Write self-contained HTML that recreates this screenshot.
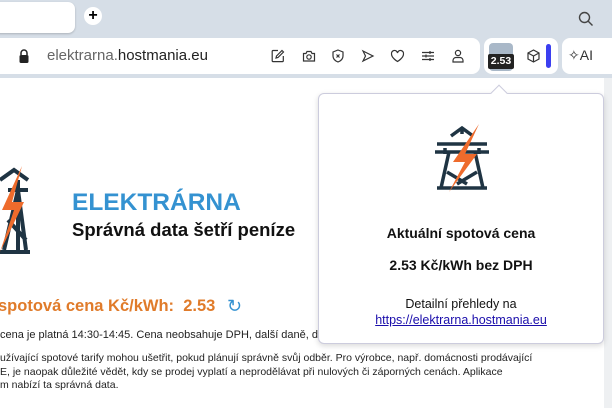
<!DOCTYPE html>
<html><head><meta charset="utf-8"><style>
*{margin:0;padding:0;box-sizing:border-box}
body{width:612px;height:408px;overflow:hidden;background:#d6dee7;font-family:"Liberation Sans",sans-serif;position:relative}
.abs{position:absolute}
.ic{position:absolute;top:49px}
</style></head><body>
<div class="abs" style="left:-10px;top:2px;width:85px;height:31px;background:#fff;border-radius:7px;box-shadow:0 1px 2px rgba(0,0,0,.2)"></div>
<div class="abs" style="left:84px;top:7px;width:18px;height:18px;border-radius:50%;background:#fff;font-weight:bold;font-size:16px;line-height:18px;text-align:center">+</div>
<svg class="abs" style="left:578px;top:11px" width="16" height="16" viewBox="0 0 16 16"><circle cx="6.5" cy="6.5" r="5" fill="none" stroke="#444" stroke-width="1.4"/><path d="M10 10l4.5 4.5" stroke="#444" stroke-width="1.4"/></svg>
<div class="abs" style="left:-10px;top:38px;width:490px;height:36px;background:#fff;border-radius:8px"></div>
<svg class="abs" style="left:18px;top:49px" width="12" height="14" viewBox="0 0 12 14"><path d="M3 6V4a3 3 0 016 0v2" fill="none" stroke="#222" stroke-width="1.5"/><rect x="1.5" y="6" width="9" height="8" rx="1.5" fill="#222"/></svg>
<div class="abs" style="left:47px;top:47px;font-size:15px;color:#666">elektrarna.<span style="color:#222">hostmania.eu</span></div>
<svg class="ic" style="left:271px" width="14" height="14" viewBox="0 0 14 14" fill="none" stroke="#333" stroke-width="1.2"><path d="M7 1.5H2a.8.8 0 00-.8.8v9.5a.8.8 0 00.8.8h9.5a.8.8 0 00.8-.8V7"/><path d="M11 1.5l1.5 1.5-5.5 5.5-2 .5.5-2z"/></svg>
<svg class="ic" style="left:302px" width="14" height="14" viewBox="0 0 14 14" fill="none" stroke="#333" stroke-width="1.2"><path d="M1.5 4.5h2.5l1-2h4l1 2h2.5v7.5h-11z"/><circle cx="7" cy="8" r="2.2"/></svg>
<svg class="ic" style="left:331px" width="14" height="14" viewBox="0 0 14 14" fill="none" stroke="#333" stroke-width="1.2"><path d="M7 1l5 2v4c0 3-2.5 5-5 6-2.5-1-5-3-5-6V3z"/><path d="M5.5 5.5l3 3M8.5 5.5l-3 3"/></svg>
<svg class="ic" style="left:361px" width="14" height="14" viewBox="0 0 14 14" fill="none" stroke="#333" stroke-width="1.2"><path d="M2 2l10 5-10 5 2.5-5z"/></svg>
<svg class="ic" style="left:390px" width="15" height="14" viewBox="0 0 15 14" fill="none" stroke="#333" stroke-width="1.2"><path d="M7.5 12.5S1.5 9 1.5 5a3 3 0 016-1 3 3 0 016 1c0 4-6 7.5-6 7.5z"/></svg>
<svg class="ic" style="left:421px" width="14" height="14" viewBox="0 0 14 14" fill="none" stroke="#333" stroke-width="1.2"><path d="M1 3.5h12M1 7h12M1 10.5h12M9 2v3M5 5.5v3M9 9v3"/></svg>
<svg class="ic" style="left:451px" width="14" height="14" viewBox="0 0 14 14" fill="none" stroke="#333" stroke-width="1.2"><circle cx="7" cy="4" r="2.6"/><path d="M2 13v-1.5a3 3 0 013-3h4a3 3 0 013 3V13z"/></svg>
<div class="abs" style="left:484px;top:38px;width:74px;height:36px;background:#fff;border-radius:8px"></div>
<div class="abs" style="left:489px;top:43px;width:24px;height:28px;background:#a9b8c8;border-radius:4px"></div>
<div class="abs" style="left:488px;top:54px;width:26px;height:15px;background:#222;border-radius:2px;color:#fff;font-size:10.5px;font-weight:bold;line-height:15px;text-align:center">2.53</div>
<svg class="abs" style="left:527px;top:49px" width="13" height="14" viewBox="0 0 13 14"><path d="M6.5 1L12 4v6l-5.5 3L1 10V4zM1 4l5.5 3L12 4M6.5 7v6" fill="none" stroke="#333" stroke-width="1.2"/></svg>
<div class="abs" style="left:546px;top:44px;width:5px;height:24px;background:#3b3ff0;border-radius:3px"></div>
<div class="abs" style="left:562px;top:38px;width:60px;height:36px;background:#fff;border-radius:8px;font-size:14px;color:#333;padding:9px 0 0 6px">✧AI</div>
<div class="abs" style="left:0;top:78px;width:604px;height:330px;background:#fff"></div>
<div class="abs" style="left:604px;top:78px;width:8px;height:330px;background:#eef0f2"></div>
<svg class="abs" style="left:-22px;top:160px" width="52" height="98" viewBox="0 0 52 98"><path d="M22 20l14 -10l14 10M30 30h20M40 20v70M26 90l14-60l8 60M20 92h32M30 60l18 20" fill="none" stroke="#1f3443" stroke-width="4"/><path d="M44 6L24 50h12L22 92l24-50H34z" fill="#ee6b2c"/></svg>
<div class="abs" style="left:72px;top:189px;font-size:24.5px;font-weight:bold;color:#3492d1">ELEKTRÁRNA</div>
<div class="abs" style="left:72px;top:219px;font-size:18.5px;font-weight:bold;color:#111">Správná data šetří peníze</div>
<div class="abs" style="left:-2px;top:297px;font-size:16.5px;font-weight:bold;color:#e07b2a">spotová cena Kč/kWh:&nbsp;&nbsp;2.53</div>
<div class="abs" style="left:227px;top:296px;font-size:18px;color:#3492d1">↻</div>
<div class="abs" style="left:0;top:329px;font-size:11px;color:#222;white-space:nowrap">cena je platná 14:30-14:45. Cena neobsahuje DPH, další daně, di</div>
<div class="abs" style="left:0;top:352px;font-size:10.5px;color:#222;white-space:nowrap;line-height:13.5px">užívající spotové tarify mohou ušetřit, pokud plánují správně svůj odběr. Pro výrobce, např. domácnosti prodávající<br>E, je naopak důležité vědět, kdy se prodej vyplatí a neprodělávat při nulových či záporných cenách. Aplikace<br>m nabízí ta správná data.</div>
<div class="abs" style="left:318px;top:93px;width:286px;height:251px;background:#fff;border:1px solid #ccd;border-radius:6px;box-shadow:0 2px 6px rgba(0,0,0,.15)"></div>
<div class="abs" style="left:493px;top:87px;width:12px;height:12px;background:#fff;border-left:1px solid #ccd;border-top:1px solid #ccd;transform:rotate(45deg)"></div>
<svg class="abs" style="left:431px;top:122px" width="62" height="72" viewBox="0 0 62 72"><path d="M6 22h50M4 30h54M20 14l11-8l11 8M31 6v6M18 30L10 66M44 30l8 36M6 66h50M16 50l20 12M46 50l-20 12M14 26v6M48 26v6" fill="none" stroke="#1f3443" stroke-width="3.5"/><path d="M48 2L22 40h12L18 70l28-38H34z" fill="#ee6b2c"/></svg>
<div class="abs" style="left:318px;top:225px;width:286px;text-align:center;font-size:14px;font-weight:bold;color:#111">Aktuální spotová cena</div>
<div class="abs" style="left:318px;top:257px;width:286px;text-align:center;font-size:14px;font-weight:bold;color:#111">2.53 Kč/kWh bez DPH</div>
<div class="abs" style="left:318px;top:297px;width:286px;text-align:center;font-size:12.5px;color:#111">Detailní přehledy na</div>
<div class="abs" style="left:318px;top:313px;width:286px;text-align:center;font-size:12.5px;color:#1a0dab;text-decoration:underline">https://elektrarna.hostmania.eu</div>
</body></html>
